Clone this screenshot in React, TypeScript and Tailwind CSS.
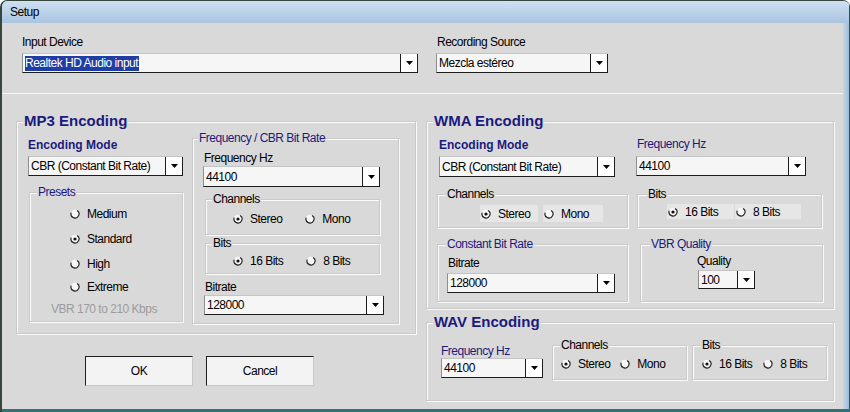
import React from "react";

const NAVY = "text-[#1b1b7e]";
const ETCH = "border border-[#c9c9c9] shadow-[inset_1px_1px_0_#fbfbfb,1px_1px_0_#fbfbfb]";

function Arrow() {
  return (
    <svg width="7" height="4" viewBox="0 0 7 4">
      <path d="M0 0H7L3.5 4Z" fill="#000" />
    </svg>
  );
}

function Combo({
  value,
  className = "",
  selected = false,
}: {
  value: string;
  className?: string;
  selected?: boolean;
}) {
  return (
    <div
      className={`flex items-stretch bg-[#f6f6f6] border-t border-t-[#c4c4c4] border-l border-l-[#8e8e8e] border-b border-b-[#1c1c1c] ${className}`}
    >
      <div className="flex-1 flex items-center pl-[2px] overflow-hidden whitespace-nowrap">
        {selected ? (
          <span className="bg-[#1f3da3] text-white pr-[1px] leading-[15px]">{value}</span>
        ) : (
          value
        )}
      </div>
      <div className="w-[18px] flex items-center justify-center bg-white border-x border-[#1c1c1c]">
        <Arrow />
      </div>
    </div>
  );
}

function RadioIcon({ checked }: { checked?: boolean }) {
  return (
    <svg width="12" height="12" viewBox="0 0 12 12" className="shrink-0">
      <circle cx="6" cy="6" r="4.3" fill="#f7f7f7" />
      <path d="M8 2.54A4 4 0 1 1 2.24 4.63" fill="none" stroke="#2a2a2a" strokeWidth="1.2" />
      {checked && <circle cx="6" cy="6" r="1.6" fill="#111" />}
    </svg>
  );
}

function Radio({
  label,
  checked,
  className = "",
  boxed = false,
}: {
  label: string;
  checked?: boolean;
  className?: string;
  boxed?: boolean;
}) {
  return (
    <div
      className={`flex items-center h-[14px] whitespace-nowrap ${boxed ? "bg-[#e6e6e6]" : ""} ${className}`}
    >
      <RadioIcon checked={checked} />
      <span className="ml-[6px]">{label}</span>
    </div>
  );
}

function Group({
  title,
  className = "",
  legendClass = "",
  children,
}: {
  title: string;
  className?: string;
  legendClass?: string;
  children?: React.ReactNode;
}) {
  return (
    <fieldset className={`${ETCH} ${className}`}>
      <legend className={`px-[1px] bg-[#d9d9d9] leading-[14px] ${legendClass}`}>{title}</legend>
      {children}
    </fieldset>
  );
}

function BigGroup({
  title,
  className = "",
  children,
}: {
  title: string;
  className?: string;
  children?: React.ReactNode;
}) {
  return (
    <fieldset className={`${ETCH} pl-[6px] ${className}`}>
      <legend className="px-[1px] bg-[#d9d9d9] leading-[18px]">
        <span className={`text-[15px] font-bold leading-[18px] tracking-normal ${NAVY}`}>{title}</span>
      </legend>
      {children}
    </fieldset>
  );
}

export default function App() {
  return (
    <div className="w-[850px] h-[412px] flex flex-col overflow-hidden rounded-t-[7px] border-t border-l-2 border-[#36463d] bg-[#a9c4df] font-['Liberation_Sans',Arial,sans-serif] text-[12px] leading-[14px] tracking-[-0.5px] text-black">
      {/* title bar */}
      <div className="h-[22px] flex items-center pl-[8px] bg-gradient-to-b from-[#d0e0f1] to-[#a9c4e0] border-r border-[#2f4f5b]">
        Setup
      </div>

      <div className="flex-1 flex">
        <div className="w-[841px] bg-[#d9d9d9] flex flex-col">
          {/* devices */}
          <div className="h-[70px] flex pl-[20px] pt-[12px]">
            <div className="w-[396px]">
              <div>Input Device</div>
              <Combo className="mt-[4px] h-[20px]" value="Realtek HD Audio input" selected />
            </div>
            <div className="ml-[18px] w-[172px]">
              <div className="ml-[1px]">Recording Source</div>
              <Combo className="mt-[4px] h-[20px]" value="Mezcla estéreo" />
            </div>
          </div>
          <div className="h-px bg-[#f7f7f7]" />

          <div className="flex pl-[14px]">
            {/* left column */}
            <div className="w-[400px] pt-[18px]">
              <BigGroup title="MP3 Encoding" className="h-[222px]">
                <div className="flex">
                  <div className="ml-[5px] w-[155px] pt-[7px]">
                    <div className={`font-bold leading-[15px] tracking-normal ${NAVY}`}>Encoding Mode</div>
                    <Combo className="mt-[3px] h-[20px]" value="CBR (Constant Bit Rate)" />
                    <Group title="Presets" className="mt-[9px] ml-[1px] w-[154px] h-[137px] pl-[7px]" legendClass={NAVY}>
                      <div className="ml-[32px] pt-[8px]">
                        <Radio label="Medium" />
                        <Radio label="Standard" checked className="mt-[11px]" />
                        <Radio label="High" className="mt-[11px]" />
                        <Radio label="Extreme" className="mt-[9px]" />
                      </div>
                      <div className="ml-[14px] mt-[8px] text-[#9c9c9c]">VBR 170 to 210 Kbps</div>
                    </Group>
                  </div>

                  <Group
                    title="Frequency / CBR Bit Rate"
                    className="ml-[9px] w-[207px] h-[193px] pl-[5px]"
                    legendClass={NAVY}
                  >
                    <div className="ml-[6px] mt-[6px]">Frequency Hz</div>
                    <Combo className="ml-[5px] mt-[1px] w-[177px] h-[21px]" value="44100" />
                    <Group title="Channels" className="ml-[7px] mt-[5px] w-[175px] h-[43px] pl-[6px]">
                      <div className="flex pt-[6px]">
                        <Radio label="Stereo" checked className="ml-[20px]" />
                        <Radio label="Mono" className="ml-[22px]" />
                      </div>
                    </Group>
                    <Group title="Bits" className="ml-[7px] mt-[1px] w-[175px] h-[38px] pl-[6px]">
                      <div className="flex pt-[4px]">
                        <Radio label="16 Bits" checked className="ml-[20px]" />
                        <Radio label="8 Bits" className="ml-[22px]" />
                      </div>
                    </Group>
                    <div className="ml-[7px] mt-[6px]">Bitrate</div>
                    <Combo className="ml-[6px] mt-[1px] w-[180px] h-[20px]" value="128000" />
                  </Group>
                </div>
              </BigGroup>

              <div className="flex mt-[22px] ml-[69px] gap-[13px]">
                <button className="w-[108px] h-[30px] bg-[#f3f3f3] border-t border-l border-[#1e1e1e] border-r border-r-[#c8c8c8] border-b border-b-[#c8c8c8]">
                  OK
                </button>
                <button className="w-[108px] h-[30px] bg-[#f3f3f3] border-t border-l border-[#1e1e1e] border-r border-r-[#c8c8c8] border-b border-b-[#c8c8c8]">
                  Cancel
                </button>
              </div>
            </div>

            {/* right column */}
            <div className="ml-[10px] w-[408px] pt-[18px]">
              <BigGroup title="WMA Encoding" className="h-[197px]">
                <div className="flex">
                  <div className="ml-[4px] w-[191px]">
                    <div className={`ml-[2px] mt-[7px] font-bold leading-[15px] tracking-normal ${NAVY}`}>
                      Encoding Mode
                    </div>
                    <Combo className="ml-[2px] mt-[3px] w-[176px] h-[21px]" value="CBR (Constant Bit Rate)" />
                    <Group title="Channels" className="mt-[10px] h-[41px] pl-[8px]">
                      <div className="flex pt-[4px]">
                        <Radio boxed label="Stereo" checked className="ml-[34px] w-[58px] !h-[17px]" />
                        <Radio boxed label="Mono" className="ml-[5px] w-[60px] !h-[17px]" />
                      </div>
                    </Group>
                    <Group title="Constant Bit Rate" className="mt-[9px] h-[65px] pl-[8px]" legendClass={NAVY}>
                      <div className="ml-[2px] mt-[5px]">Bitrate</div>
                      <Combo className="ml-[1px] mt-[3px] w-[168px] h-[20px]" value="128000" />
                    </Group>
                  </div>
                  <div className="ml-[8px] w-[187px]">
                    <div className={`ml-[1px] mt-[6px] ${NAVY}`}>Frequency Hz</div>
                    <Combo className="mt-[5px] w-[170px] h-[20px]" value="44100" />
                    <Group title="Bits" className="ml-[1px] mt-[11px] w-[185px] h-[41px] pl-[9px]">
                      <div className="flex pt-[3px]">
                        <Radio boxed label="16 Bits" checked className="ml-[20px] w-[67px] !h-[15px]" />
                        <Radio boxed label="8 Bits" className="ml-[1px] w-[66px] !h-[15px]" />
                      </div>
                    </Group>
                    <Group title="VBR Quality" className="ml-[4px] mt-[9px] w-[183px] h-[65px] pl-[9px]" legendClass={NAVY}>
                      <div className="ml-[47px] mt-[3px]">Quality</div>
                      <Combo className="ml-[48px] mt-[2px] w-[57px] h-[19px]" value="100" />
                    </Group>
                  </div>
                </div>
              </BigGroup>

              <BigGroup title="WAV Encoding" className="mt-[4px] h-[88px]">
                <div className="flex items-start">
                  <div className="ml-[8px] mt-[12px] w-[102px]">
                    <div className={NAVY}>Frequency Hz</div>
                    <Combo className="h-[20px]" value="44100" />
                  </div>
                  <Group title="Channels" className="ml-[9px] mt-[6px] w-[135px] h-[42px] pl-[7px]">
                    <div className="flex pt-[5px]">
                      <Radio label="Stereo" checked />
                      <Radio label="Mono" className="ml-[9px]" />
                    </div>
                  </Group>
                  <Group title="Bits" className="ml-[5px] mt-[6px] w-[135px] h-[42px] pl-[8px]">
                    <div className="flex pt-[5px]">
                      <Radio label="16 Bits" checked />
                      <Radio label="8 Bits" className="ml-[10px]" />
                    </div>
                  </Group>
                </div>
              </BigGroup>
            </div>
          </div>
        </div>
        <div className="w-[7px] bg-gradient-to-r from-[#c4d8ec] to-[#9fbcd9] border-r border-[#2f4f5b]" />
      </div>
      <div className="h-[3px] bg-[#35707a]" />
    </div>
  );
}
